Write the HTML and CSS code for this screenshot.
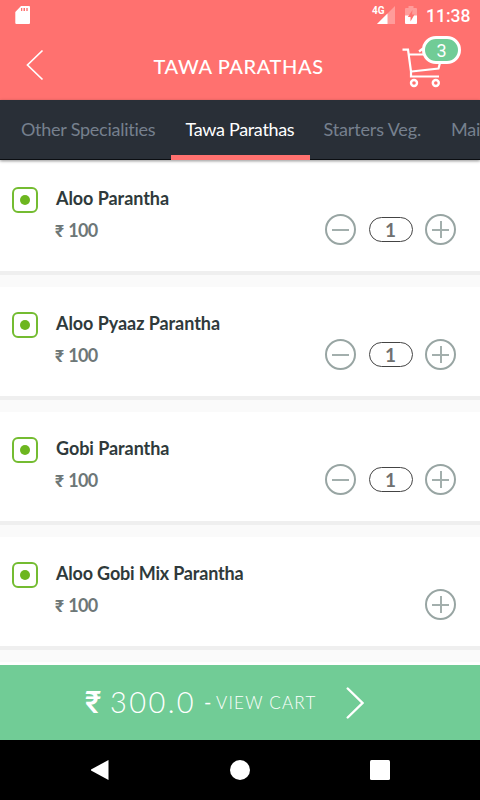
FILE: index.html
```html
<!DOCTYPE html>
<html lang="en">
<head>
<meta charset="utf-8">
<title>Tawa Parathas</title>
<link rel="stylesheet" href="styles.css">
</head>
<body>
<header class="top">
  <div class="status">
    <svg class="sd" width="16" height="18" viewBox="0 0 16 18"><path fill="#fff" fill-rule="evenodd" d="M6 0H14Q15 0 15 1V17Q15 18 14 18H1.500Q.3 18 .3 17V6ZM6 2V5H7.300V2ZM8.500 2V5H10V2ZM11.300 2V5H12.700V2Z"/></svg>
    <span class="lte">4G</span>
    <svg class="signal" width="18" height="18" viewBox="0 0 18 18"><path fill="#fff" fill-opacity=".3" d="M18 0V18H0Z"/><path fill="#fff" d="M10.500 7.500V18H0Z"/></svg>
    <svg class="battery" width="12" height="18" viewBox="0 0 12 18"><path fill="#fff" fill-opacity=".3" d="M3.500 0H8.500V2H11Q12 2 12 3V10H0V3Q0 2 1 2H3.500Z"/><path fill="#fff" d="M0 9.500H12V17Q12 18 11 18H1Q0 18 0 17Z"/><path fill="#ff716f" d="M7.500 4L2.800 11H5.500V15.500L9.500 8.500H7Z"/></svg>
    <span class="clock">11:38</span>
  </div>
  <div class="bar">
    <svg class="back" width="18" height="32" viewBox="0 0 18 32"><path d="M16.500 1.500L1.500 16L16.500 30.500" fill="none" stroke="#fff" stroke-width="1.700"/></svg>
    <h1 class="title">TAWA PARATHAS</h1>
    <div class="cart">
      <svg width="42" height="42" viewBox="0 0 42 42"><g fill="none" stroke="#fff" stroke-width="2.200"><path d="M.5 2.700H6L9 24.500V29.500H37M6.500 7.500H25M9.500 24.500L36.500 21.500L38.500 14M17 4.500L21 1.500"/><circle cx="12" cy="36" r="3" stroke-width="2.400"/><circle cx="33.800" cy="36" r="3" stroke-width="2.400"/></g></svg>
      <span class="badge">3</span>
    </div>
  </div>
</header>
<nav class="tabs">
  <span class="tab t1">Other Specialities</span><span class="tab active">Tawa Parathas</span><span class="tab t3">Starters Veg.</span><span class="tab t4">Mai</span>
</nav>
<main class="list">
  <section class="item">
    <i class="veg"></i>
    <div class="info"><h2 class="name">Aloo Parantha</h2><p class="price"><b class="rs">₹</b> 100</p></div>
    <div class="qty"><i class="round"></i><span class="count">1</span><i class="round plus"></i></div>
  </section>
  <section class="item">
    <i class="veg"></i>
    <div class="info"><h2 class="name">Aloo Pyaaz Parantha</h2><p class="price"><b class="rs">₹</b> 100</p></div>
    <div class="qty"><i class="round"></i><span class="count">1</span><i class="round plus"></i></div>
  </section>
  <section class="item">
    <i class="veg"></i>
    <div class="info"><h2 class="name">Gobi Parantha</h2><p class="price"><b class="rs">₹</b> 100</p></div>
    <div class="qty"><i class="round"></i><span class="count">1</span><i class="round plus"></i></div>
  </section>
  <section class="item">
    <i class="veg"></i>
    <div class="info"><h2 class="name mix">Aloo Gobi Mix Parantha</h2><p class="price"><b class="rs">₹</b> 100</p></div>
    <div class="qty"><i class="round plus"></i></div>
  </section>
</main>
<footer class="checkout">
  <span class="total-rs">₹</span><span class="total">300.0</span><span class="dash">-</span><span class="view">VIEW CART</span>
  <svg class="next" width="18" height="32" viewBox="0 0 18 32"><path d="M1.700 1.500L16.500 16L1.700 30.500" fill="none" stroke="#fff" stroke-width="2.400" stroke-linecap="round"/></svg>
</footer>
<div class="system">
  <svg width="20" height="20" viewBox="0 0 20 20"><path fill="#fff" d="M18.500 0V20L1 10.500V9.500Z"/></svg>
  <svg width="20" height="20" viewBox="0 0 20 20"><circle cx="10" cy="10" r="10" fill="#fff"/></svg>
  <svg width="20" height="20" viewBox="0 0 20 20"><rect width="20" height="20" rx="1.500" fill="#fff"/></svg>
</div>
</body>
</html>
```
FILE: styles.css
```css
* { box-sizing: border-box; }
body {
  margin: 0;
  width: 480px;
  height: 800px;
  overflow: hidden;
  display: flex;
  flex-direction: column;
  background: #fafafa;
  font-family: Lato, sans-serif;
}
svg { display: block; flex: none; }
h1, h2, p { margin: 0; }

.top { flex: none; height: 100px; background: #ff716f; color: #fff; }
.status { display: flex; height: 36px; padding: 6px 8px 0 15px; }
.lte { margin-left: 341px; width: 5px; font: 700 10px/10px Roboto, sans-serif; white-space: nowrap; }
.battery { margin-left: 10px; }
.clock { margin-left: 9px; font: 500 17.500px/20px Roboto, sans-serif; }
.bar { display: flex; height: 64px; }
.back { margin: 13px 0 0 26px; }
.title {
  margin-left: 109.500px;
  width: 248.500px;
  font: 500 20px/61px Lato, sans-serif;
  letter-spacing: .6px;
  white-space: nowrap;
}
.cart { position: relative; padding-top: 11px; }
.badge {
  position: absolute;
  left: 20px;
  top: 0;
  width: 39px;
  height: 28px;
  border: 3px solid #fff;
  border-radius: 14px;
  background: #71cc96;
  font: 400 18px/24px Roboto, sans-serif;
  text-align: center;
}

.tabs {
  position: relative;
  flex: none;
  display: flex;
  height: 60px;
  background: #292f37;
  border-bottom: 1px solid #0b0e12;
  box-shadow: 0 1px 3px rgba(0, 0, 0, .4);
  color: #76808e;
  font-size: 18px;
  line-height: 59px;
  letter-spacing: -.25px;
  font-variant-ligatures: none;
  white-space: nowrap;
  padding-left: 6px;
}
.tab { flex: none; height: 60px; padding-left: 15px; }
.t1 { width: 164.500px; }
.active { width: 139px; color: #fff; border-bottom: 5px solid #ff716f; letter-spacing: -.32px; }
.t3 { width: 126.500px; padding-left: 14px; letter-spacing: -.15px; }
.t4 { flex: 1; min-width: 0; overflow: hidden; }

.list { flex: 1; min-height: 0; overflow: hidden; padding-top: 2px; }
.item {
  display: flex;
  height: 113px;
  margin-bottom: 12px;
  padding-left: 12px;
  background: #fff;
  border-bottom: 4px solid #efefef;
}
.list::after { content: ""; display: block; height: 20px; background: #fff; }
.veg {
  display: grid;
  place-items: center;
  width: 26px;
  height: 26px;
  margin-top: 25px;
  border: 2px solid #74bc31;
  border-radius: 6px;
}
.veg::after { content: ""; width: 10px; height: 10px; border-radius: 50%; background: #6db61f; }
.info { margin-left: 18px; padding-top: 20px; }
.name { font-size: 18px; font-weight: 700; line-height: 32px; letter-spacing: -.06px; color: #2f3a3b; white-space: nowrap; }
.mix { letter-spacing: -.18px; }
.price { margin-left: -1px; font-size: 18px; font-weight: 700; line-height: 32px; letter-spacing: -.7px; color: #6d7777; }
.rs { display: inline-block; width: 9.500px; font: 700 17px/20px Roboto, "Noto Sans", sans-serif; }
.qty { display: flex; align-items: center; gap: 12.500px; height: 31px; margin: 52px 24px 0 auto; }
.round {
  display: grid;
  place-items: center;
  width: 31px;
  height: 31px;
  border: 2px solid #98a5a3;
  border-radius: 50%;
}
.round::before { content: ""; grid-area: 1 / 1; width: 17px; height: 2px; background: #a3afad; }
.plus::after { content: ""; grid-area: 1 / 1; width: 2px; height: 17px; background: #a3afad; }
.count {
  width: 44px;
  height: 25px;
  border: 1px solid #444;
  border-radius: 13px;
  color: #707070;
  font-size: 19px;
  font-weight: 700;
  line-height: 23px;
  text-align: center;
}

.checkout {
  position: relative;
  flex: none;
  display: flex;
  height: 75px;
  padding-left: 85px;
  background: #71cc96;
  color: #fff;
  line-height: 75px;
  white-space: nowrap;
}
.total-rs { width: 25px; font: 500 31px/75px Roboto, "Noto Sans", sans-serif; }
.total { width: 94px; font-size: 29px; font-weight: 300; letter-spacing: 2.400px; line-height: 74px; }
.dash { width: 12px; font-size: 20px; line-height: 73px; }
.view { width: 130px; font-size: 17px; font-weight: 300; letter-spacing: 1.250px; line-height: 76px; }
.next { margin-top: 22px; }

.system { flex: none; display: flex; gap: 120px; height: 60px; padding: 20px 90px; background: #000; }
```
